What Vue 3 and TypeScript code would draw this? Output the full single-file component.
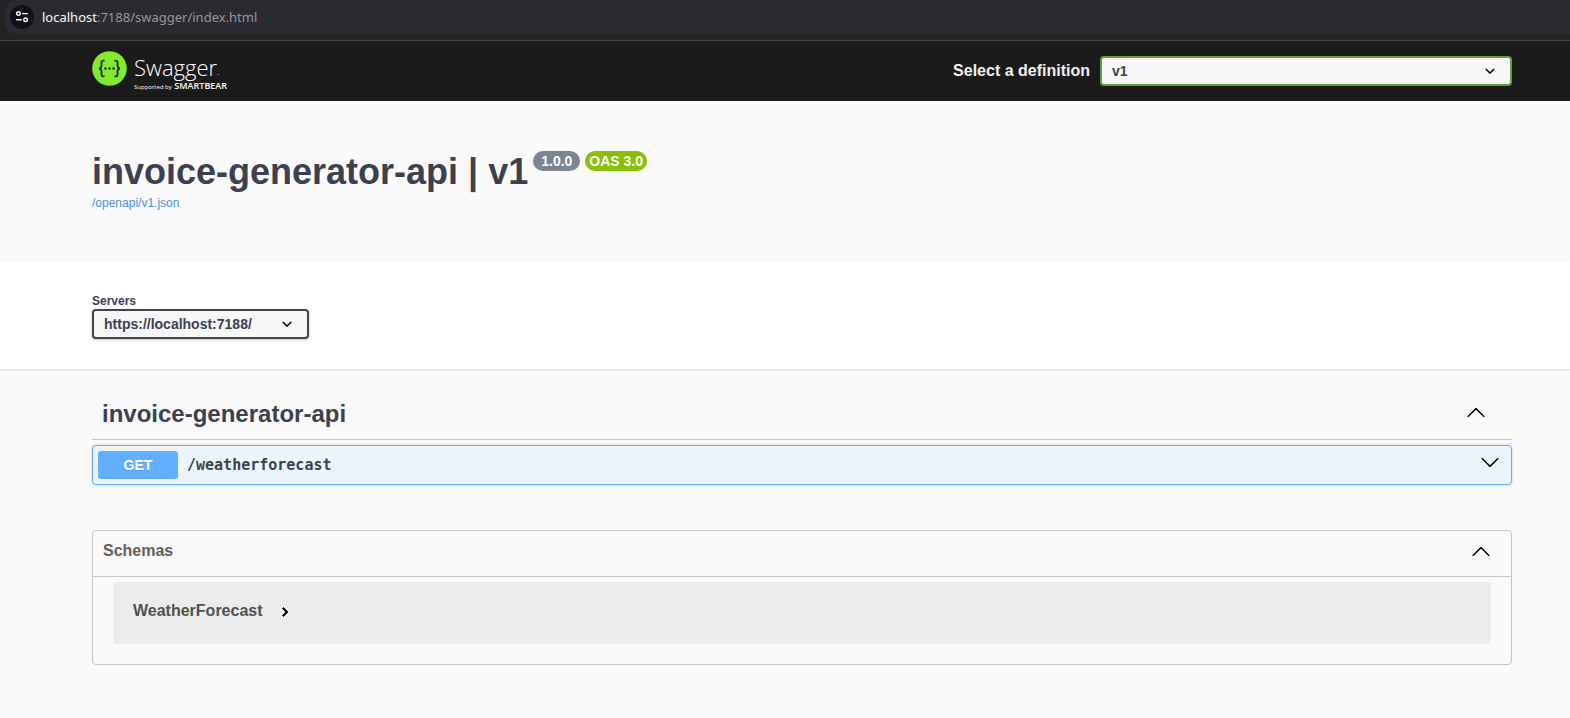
<script setup lang="ts">
import { ref } from 'vue'

interface Operation {
  method: string
  path: string
}

const definitions: string[] = ['v1']
const servers: string[] = ['https://localhost:7188/']
const definition = ref(definitions[0])
const server = ref(servers[0])
const address = { host: 'localhost', rest: ':7188/swagger/index.html' }
const operations: Operation[] = [{ method: 'GET', path: '/weatherforecast' }]
const schemas: string[] = ['WeatherForecast']

const arrowUp =
  'M17.418 14.908c.272.268.709.268.979 0s.271-.701 0-.969l-7.908-7.83c-.27-.268-.707-.268-.979 0l-7.908 7.83c-.27.268-.27.701 0 .969s.709.268.979 0L10 7.767l7.418 7.141z'
const arrowDown =
  'M17.418 6.109c.272-.268.709-.268.979 0s.271.701 0 .969l-7.908 7.83c-.27.268-.707.268-.979 0l-7.908-7.83c-.27-.268-.27-.701 0-.969s.709-.268.979 0L10 13.25l7.418-7.141z'
</script>

<template>
  <div class="page">
    <div class="browser">
      <div class="urlbar">
        <button class="site-info" type="button" aria-label="Site information">
          <svg width="14" height="14" viewBox="0 0 14 14" fill="none" stroke="#fbfbfe" stroke-width="1.4" stroke-linecap="round">
            <circle cx="3.4" cy="3.6" r="1.8" />
            <path d="M7.6 3.6h4.8M1.6 9.8h4.6" />
            <circle cx="10.6" cy="9.8" r="1.8" />
          </svg>
        </button>
        <span class="address"><span class="host">{{ address.host }}</span>{{ address.rest }}</span>
      </div>
    </div>

    <header class="topbar">
      <a class="logo" href="#">
        <svg class="mark" width="35" height="35" viewBox="0 0 35 35">
          <circle cx="17.5" cy="17.5" r="17.3" fill="#85ea2d" />
          <g fill="none" stroke="#173647" stroke-width="1.9">
            <path d="M12.6 9.6h-1c-1.5 0-2.1.8-2.1 2.2v2.6c0 1.7-.7 2.7-2.3 3.1 1.6.4 2.3 1.4 2.3 3.1v2.6c0 1.4.6 2.2 2.1 2.2h1" />
            <path d="M22.4 9.6h1c1.5 0 2.1.8 2.1 2.2v2.6c0 1.7.7 2.7 2.3 3.1-1.6.4-2.3 1.4-2.3 3.1v2.6c0 1.4-.6 2.2-2.1 2.2h-1" />
          </g>
          <g fill="#173647">
            <circle cx="13.4" cy="17.5" r="1.3" />
            <circle cx="17.5" cy="17.5" r="1.3" />
            <circle cx="21.6" cy="17.5" r="1.3" />
          </g>
        </svg>
        <span class="wordmark">
          <span class="name">Swagger<span class="tm">™</span></span>
          <span class="support">Supported by <b>SMARTBEAR</b></span>
        </span>
      </a>
      <label class="definition">
        <span>Select a definition</span>
        <select v-model="definition">
          <option v-for="d in definitions" :key="d">{{ d }}</option>
        </select>
      </label>
    </header>

    <section class="info">
      <h1>
        <span>invoice-generator-api | v1</span>
        <span class="badge version">1.0.0</span>
        <span class="badge oas">OAS 3.0</span>
      </h1>
      <a href="#">/openapi/v1.json</a>
    </section>

    <section class="servers">
      <label for="server">Servers</label>
      <select id="server" v-model="server">
        <option v-for="s in servers" :key="s">{{ s }}</option>
      </select>
    </section>

    <main class="content">
      <h2 class="tag">
        <span>invoice-generator-api</span>
        <button type="button" aria-label="Collapse section">
          <svg width="20" height="20" viewBox="0 0 20 20"><path :d="arrowUp" /></svg>
        </button>
      </h2>

      <div v-for="op in operations" :key="op.path" class="operation">
        <button class="summary" type="button">
          <span class="method">{{ op.method }}</span>
          <span class="path">{{ op.path }}</span>
          <svg width="20" height="20" viewBox="0 0 20 20"><path :d="arrowDown" /></svg>
        </button>
      </div>

      <section class="models">
        <h3>
          <button type="button">
            <span>Schemas</span>
            <svg width="20" height="20" viewBox="0 0 20 20"><path :d="arrowUp" /></svg>
          </button>
        </h3>
        <div v-for="s in schemas" :key="s" class="model">
          <button type="button">
            <span>{{ s }}</span>
            <svg width="18" height="18" viewBox="0 0 24 24"><path d="M10 6L8.59 7.41 13.17 12l-4.58 4.59L10 18l6-6z" stroke="#000" stroke-width="1" /></svg>
          </button>
        </div>
      </section>
    </main>
  </div>
</template>

<style>
body {
  background: #fafafa;
}
</style>

<style scoped>
.page {
  --left: 92px;
  --right: 58px;
  color: #3b4151;
  font-family: "Liberation Sans", Arial, sans-serif;
}
.page *,
.page {
  box-sizing: border-box;
}
button {
  border: 0;
  padding: 0;
  background: none;
  color: inherit;
  font: inherit;
  cursor: pointer;
}
svg {
  display: block;
  flex: none;
}
a {
  text-decoration: none;
}

.browser {
  height: 41px;
  padding-left: 5px;
  background: #232324;
  border-bottom: 1px solid #454548;
}
.urlbar {
  display: flex;
  align-items: center;
  gap: 8px;
  height: 34px;
  padding-left: 5px;
  background: #2b2a30;
  border-radius: 12px 0 0 12px;
}
.site-info {
  display: grid;
  place-items: center;
  width: 24px;
  height: 24px;
  border-radius: 50%;
  background: #12111a;
}
.address {
  font: 13px/20px "Noto Sans", "Open Sans", sans-serif;
  color: #98979f;
}
.host {
  color: #fbfbfe;
}

.topbar {
  display: flex;
  align-items: center;
  justify-content: space-between;
  height: 60px;
  padding: 0 var(--right) 0 var(--left);
  background: #1b1b1b;
}
.logo {
  display: flex;
  align-items: flex-start;
  gap: 7px;
  height: 40px;
  color: #fff;
  font-family: "Open Sans", "Noto Sans", sans-serif;
}
.wordmark {
  display: flex;
  flex-direction: column;
  padding-top: 4px;
}
.name {
  height: 26px;
  font-size: 22px;
  line-height: 24px;
  font-weight: 300;
}
.tm {
  font-size: 3px;
}
.support {
  font-size: 6px;
  line-height: 10px;
  white-space: nowrap;
}
.support b {
  margin-left: 1px;
  font-size: 9px;
  font-weight: 600;
}
.definition {
  display: flex;
  align-items: center;
  gap: 10px;
  width: 560px;
  color: #f0f0f0;
  font-size: 16px;
  font-weight: 700;
  white-space: nowrap;
}
.definition span {
  flex: 1;
  text-align: right;
}
select {
  appearance: none;
  height: 30px;
  padding: 0 40px 0 10px;
  border: 2px solid #41444e;
  border-radius: 4px;
  background: #f7f7f7 url('data:image/svg+xml,<svg xmlns="http://www.w3.org/2000/svg" viewBox="0 0 20 20"><path d="M13.418 7.859a.695.695 0 01.978 0 .68.68 0 010 .969l-3.908 3.83a.697.697 0 01-.979 0l-3.908-3.83a.68.68 0 010-.969.695.695 0 01.978 0L10 11l3.418-3.141z"/></svg>') right 10px center / 20px no-repeat;
  color: #3b4151;
  font: 700 14px/20px "Liberation Sans", Arial, sans-serif;
}
.definition select {
  width: 412px;
  border-color: #62a03f;
}

.info {
  height: 160px;
  padding: 50px var(--right) 0 var(--left);
}
h1,
h2,
h3 {
  margin: 0;
}
h1 {
  display: flex;
  align-items: flex-start;
  gap: 5px;
  font-size: 36px;
  line-height: 42px;
}
.badge {
  height: 20px;
  padding: 0 4px;
  border-radius: 10px;
  background: #89bf04;
  color: #fff;
  font-size: 14px;
  line-height: 20px;
}
.version {
  padding: 0 8px;
  background: #7d8492;
}
.info a {
  display: block;
  width: max-content;
  color: #4990e2;
  font-size: 12px;
  line-height: 20px;
}

.servers {
  display: flex;
  flex-direction: column;
  align-items: flex-start;
  padding: 32px var(--right) 30px var(--left);
  background: #fff;
  box-shadow: 0 1px 2px rgba(0, 0, 0, 0.15);
}
.servers label {
  font-size: 12px;
  line-height: 16px;
  font-weight: 700;
}
.servers select {
  width: 217px;
  box-shadow: 0 1px 3px rgba(0, 0, 0, 0.25);
}

.content {
  padding: 20px var(--right) 54px var(--left);
}
.tag {
  display: flex;
  align-items: flex-start;
  justify-content: space-between;
  height: 51px;
  padding: 10px 26px 0 10px;
  border-bottom: 1px solid #c3c4c8;
  font-size: 24px;
  line-height: 30px;
}
.tag button {
  padding-top: 3px;
}
.operation {
  margin-top: 5px;
  border: 1px solid #61affe;
  border-radius: 4px;
  background: #ebf3fb;
  box-shadow: 0 0 3px rgba(0, 0, 0, 0.19);
}
.summary {
  display: flex;
  align-items: flex-start;
  width: 100%;
  padding: 5px 11px 5px 5px;
  text-align: left;
}
.summary svg {
  margin-top: 1px;
}
.method {
  width: 80px;
  border-radius: 3px;
  background: #61affe;
  color: #fff;
  font-size: 14px;
  line-height: 28px;
  font-weight: 700;
  text-align: center;
  text-shadow: 0 1px 0 rgba(0, 0, 0, 0.1);
}
.path {
  flex: 1;
  padding-left: 9px;
  font: 700 15px/28px "DejaVu Sans Mono", monospace;
}
.models {
  margin-top: 45px;
  padding-bottom: 20px;
  border: 1px solid #c3c4c8;
  border-radius: 4px;
}
h3 {
  margin-bottom: 5px;
  border-bottom: 1px solid #c3c4c8;
  color: #606060;
  font-size: 16px;
  line-height: 20px;
}
h3 button {
  display: flex;
  justify-content: space-between;
  width: 100%;
  padding: 10px 20px 15px 10px;
}
.model {
  margin: 0 20px;
  padding: 19px 20px 23px;
  border-radius: 4px;
  background: #ececec;
}
.model button {
  display: flex;
  align-items: flex-end;
  gap: 13px;
  color: #505050;
  font-size: 16px;
  line-height: 20px;
  font-weight: 700;
}
</style>
